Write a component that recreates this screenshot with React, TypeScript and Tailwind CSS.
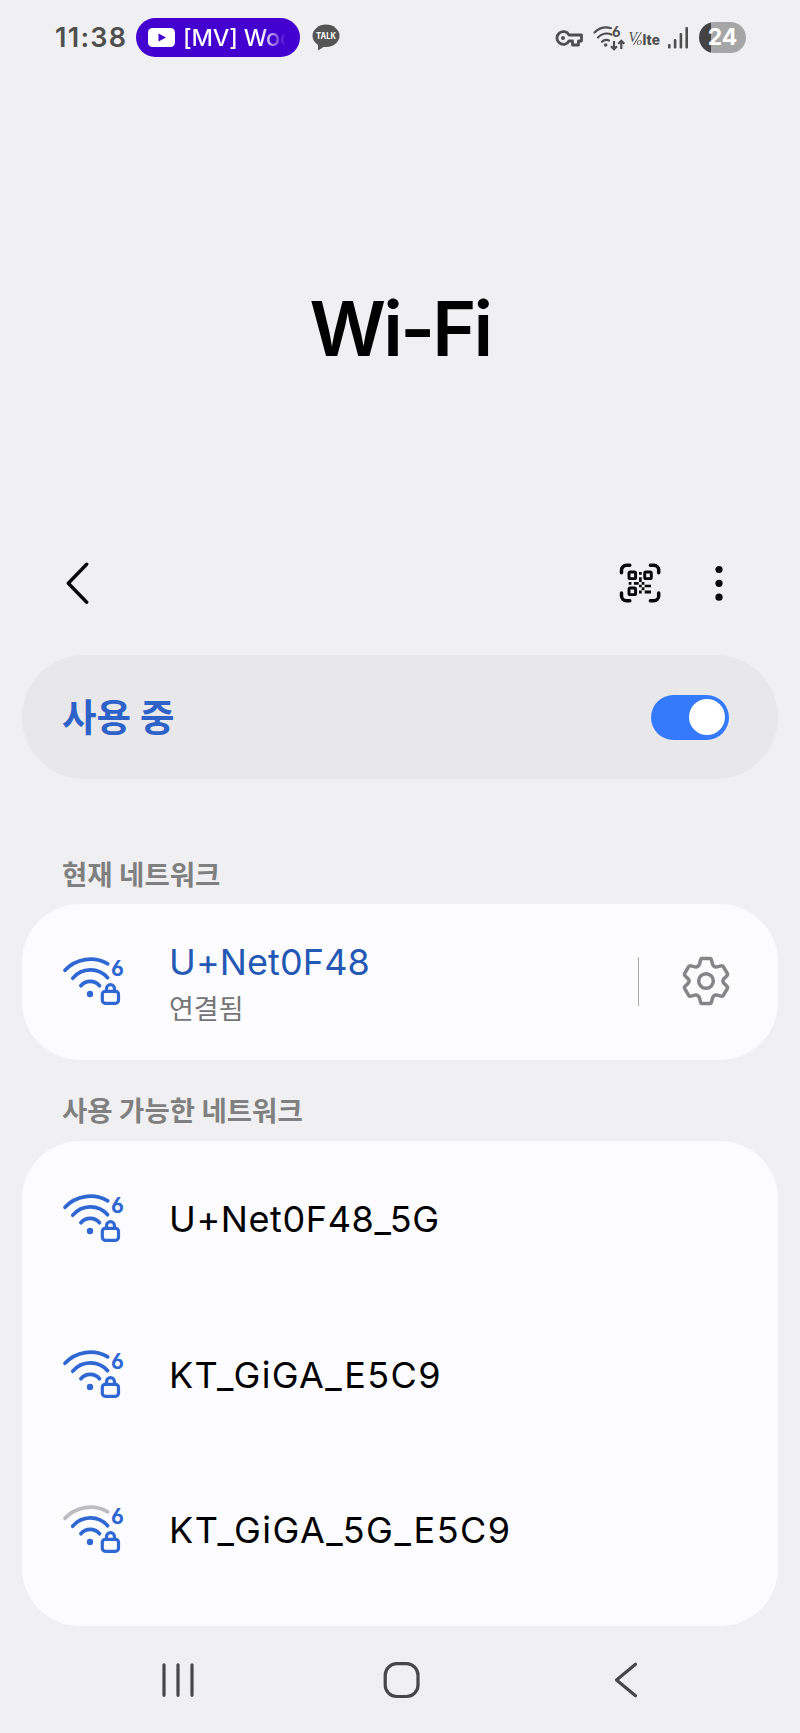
const networks = [
  { name: "U+Net0F48_5G", strong: true, spacing: "tracking-[0.6px]" },
  { name: "KT_GiGA_E5C9", strong: true, spacing: "tracking-[1.35px]" },
  { name: "KT_GiGA_5G_E5C9", strong: false, spacing: "tracking-[1.5px]" },
];

const WifiIcon = ({ strong = true }: { strong?: boolean }) => (
  <svg width="64" height="52" viewBox="0 0 64 52" fill="none" stroke="#2f67d3" strokeWidth="3.7" strokeLinecap="round" className="shrink-0">
    <path d="M3 16.3A34.9 34.9 0 0 1 45.7 9.8" stroke={strong ? "#2f67d3" : "#bdbdbd"} />
    <path d="M10.8 24.2A22.7 22.7 0 0 1 45.6 23.7" />
    <path d="M18.9 31.7A12.2 12.2 0 0 1 37.5 31.7" />
    <circle cx="28" cy="40" r="3.2" fill="#2f67d3" stroke="none" />
    <rect x="40.3" y="37.3" width="16.2" height="12" rx="3" strokeWidth="3.2" />
    <path d="M44.5 37v-2.3a4 4 0 0 1 8 0V37" strokeWidth="3.2" />
    <text
      x="49"
      y="22"
      fill="#2f67d3"
      stroke="none"
      className="font-['Inter'] text-[21px] font-bold [font-feature-settings:'cv03']"
    >
      6
    </text>
  </svg>
);

const StatusBar = () => (
  <div className="flex h-[75px] shrink-0 items-center pl-[55px] pr-[54px] text-[#4f4f4f]">
    <span className="w-[81px] shrink-0 text-[27px] font-semibold leading-none tracking-[1.3px]">11:38</span>
    <div className="flex h-[39px] w-[164px] shrink-0 items-center rounded-full bg-[#4300cf] pl-3">
      <svg width="27" height="19" viewBox="0 0 27 19" className="shrink-0">
        <rect width="27" height="19" rx="4.5" fill="#fff" />
        <path d="M10.5 5.5v8l7.5-4z" fill="#4300cf" />
      </svg>
      <span className="ml-2 w-[112px] shrink-0 whitespace-nowrap bg-linear-to-r from-white from-70% to-transparent to-92% bg-clip-text text-[23.5px] font-medium leading-[34px] tracking-[-0.2px] text-transparent">
        [MV] Woo
      </span>
    </div>
    {/* KakaoTalk */}
    <svg width="28" height="27" viewBox="0 0 28 27" className="ml-3 shrink-0">
      <ellipse cx="14" cy="11.8" rx="13.5" ry="11.2" fill="#555" />
      <path d="M6 18v8.5l8-5z" fill="#555" />
      <text x="14" y="15" textAnchor="middle" textLength="20" lengthAdjust="spacingAndGlyphs" fill="#fff" className="font-['Inter'] text-[9px] font-bold">
        TALK
      </text>
    </svg>

    <div className="ml-auto flex items-center">
      {/* VPN key */}
      <svg width="28" height="18" viewBox="0 0 28 18" fill="none" stroke="#4f4f4f" strokeWidth="2.8">
        <path d="M14 6A6.4 6.4 0 1 0 14 12h3.5v4h6v-4H26.5V6z" strokeLinejoin="round" />
        <circle cx="8" cy="9" r="2" fill="#4f4f4f" stroke="none" />
      </svg>
      <svg width="34" height="32" viewBox="0 -3 34 32" fill="none" stroke="#4f4f4f" strokeWidth="2.2" strokeLinecap="round" className="ml-2.5">
        <path d="M1.5 7.5A17 17 0 0 1 18 3.2" />
        <path d="M5 12.5A12 12 0 0 1 18.5 9.6" />
        <path d="M9 16.8A6 6 0 0 1 16 15.6" />
        <circle cx="12.7" cy="20" r="1.7" fill="#4f4f4f" stroke="none" />
        <path d="M21 16v8M18 21.3l3 3 3-3M28.3 24v-8M25.3 18.7l3-3 3 3" strokeLinecap="butt" />
        <text x="19" y="12" fill="#4f4f4f" stroke="none" className="font-['Inter'] text-[14px] font-bold [font-feature-settings:'cv03']">
          6
        </text>
      </svg>
      <svg width="33" height="24" viewBox="0 0 33 24" fill="#4f4f4f" className="ml-0.5">
        <text x="-0.5" y="15.5" className="font-['Liberation_Serif'] text-[14px] italic">V</text>
        <path d="M12.5 6 4.5 19" stroke="#4f4f4f" strokeWidth="1" />
        <text x="7.5" y="19" className="font-['Liberation_Serif'] text-[11px] italic">o</text>
        <text x="13.5" y="18.7" textLength="17.5" lengthAdjust="spacingAndGlyphs" className="font-['Inter'] text-[14px] font-extrabold">
          lte
        </text>
      </svg>
      <svg width="20" height="22" viewBox="0 0 20 22" className="ml-1.5" fill="#4f4f4f">
        <rect x="0" y="17" width="2.6" height="4.5" rx="1" />
        <rect x="5.8" y="12" width="2.6" height="9.5" rx="1" />
        <rect x="11.6" y="6" width="2.6" height="15.5" rx="1" />
        <rect x="17.4" y="0" width="2.6" height="21.5" rx="1" />
      </svg>
      <div className="ml-[11px] flex h-[31px] w-[47px] items-center justify-center rounded-full bg-linear-to-r from-[#444] from-25% to-[#a6a6a6] to-25% text-[23px] font-bold leading-none text-white">
        24
      </div>
    </div>
  </div>
);

const QrIcon = () => (
  <svg width="44" height="42" viewBox="0 0 44 42" fill="none" stroke="#080808">
    <path
      d="M3.5 10.8V8.3a5 5 0 0 1 5-5h3.3M32.4 3.3h3.3a5 5 0 0 1 5 5v2.5M40.7 31v2.7a5 5 0 0 1-5 5h-3.3M11.8 38.7H8.5a5 5 0 0 1-5-5V31"
      strokeWidth="3.5"
      strokeLinecap="round"
    />
    <rect x="11" y="10" width="6.6" height="6.6" rx="1.2" strokeWidth="2.9" />
    <rect x="26.7" y="10" width="6.6" height="6.6" rx="1.2" strokeWidth="2.9" />
    <rect x="11" y="26" width="6.6" height="6.6" rx="1.2" strokeWidth="2.9" />
    <path
      d="M21 10h2.7v2.7H21zM21 15.3h2.7V20H21zM10.7 20h2.7v2.7h-2.7zM16 20h4.7v2.7H16zM23.7 20h2.7v2.7h-2.7zM21 22.7h2.7v2.6H21zM26.7 22.7H33v2.6h-6.3zM23.7 25.3h2.7v2.9h-2.7zM21 28.6h2.7v2.8H21zM26.7 28.6H33v2.8h-6.3z"
      fill="#080808"
      stroke="none"
    />
  </svg>
);

const GearIcon = () => (
  <svg width="50" height="50" viewBox="-25 -25 50 50" fill="none" stroke="#858585" strokeWidth="3.5" strokeLinejoin="round">
    <path d="M-4.3-22.5H4.3Q5-22.5 5.3-21.5L6.5-17Q7.2-14.6 10-13.9L15.2-15.1Q16.6-15.4 17.3-14.4L21.5-7.3Q21.9-6.5 21.2-5.6L17.6-2Q16.2 0 17.6 2L21.2 5.6Q21.9 6.5 21.5 7.3L17.3 14.4Q16.6 15.4 15.2 15.1L10 13.9Q7.2 14.6 6.5 17L5.3 21.5Q5 22.5 4.3 22.5H-4.3Q-5 22.5-5.3 21.5L-6.5 17Q-7.2 14.6-10 13.9L-15.2 15.1Q-16.6 15.4-17.3 14.4L-21.5 7.3Q-21.9 6.5-21.2 5.6L-17.6 2Q-16.2 0-17.6-2L-21.2-5.6Q-21.9-6.5-21.5-7.3L-17.3-14.4Q-16.6-15.4-15.2-15.1L-10-13.9Q-7.2-14.6-6.5-17L-5.3-21.5Q-5-22.5-4.3-22.5Z" />
    <circle r="7.3" />
  </svg>
);

export default function App() {
  return (
    <div className="flex h-[1733px] w-[800px] flex-col overflow-hidden bg-[#f0f0f2] font-['Inter','Noto_Sans_CJK_KR',sans-serif] text-black">
      <StatusBar />

      <div className="flex h-[466px] shrink-0 items-center justify-center pt-10">
        <h1 className="text-[75px] font-[560] leading-none tracking-[-2.8px]">Wi-Fi</h1>
      </div>

      {/* Toolbar */}
      <div className="flex h-[84px] shrink-0 items-center pl-[66px] pr-[76px]">
        <svg width="24" height="42" viewBox="0 0 24 42" fill="none" stroke="#080808" strokeWidth="3.4" strokeLinecap="round" strokeLinejoin="round">
          <path d="M20.7 2.3 2.3 21.3l18.4 19" />
        </svg>
        <div className="ml-auto">
          <QrIcon />
        </div>
        <svg width="10" height="40" viewBox="0 0 10 40" className="ml-[52px]" fill="#080808">
          <circle cx="5" cy="6.5" r="3.6" />
          <circle cx="5" cy="20.3" r="3.6" />
          <circle cx="5" cy="34.2" r="3.6" />
        </svg>
      </div>

      <div className="mx-[22px] mt-[30px] flex h-[124px] shrink-0 items-center justify-between rounded-full bg-[#e8e8ea] pl-10 pr-[49px]">
        <span className="pt-0.5 text-[37.5px] font-bold leading-none text-[#2f62c8]">사용 중</span>
        <div className="flex h-[45px] w-[78px] items-center justify-end rounded-full bg-[#3579fd] pr-1">
          <div className="size-9 rounded-full bg-white" />
        </div>
      </div>

      <h2 className="mt-[76px] h-[49px] shrink-0 pl-[62px] text-[27.5px] font-bold leading-10 text-[#808080]">현재 네트워크</h2>
      <div className="mx-[22px] flex h-[156px] shrink-0 items-center rounded-[58px] bg-[#fcfcfe] pl-10 pr-[47px]">
        <div className="pb-1">
          <WifiIcon />
        </div>
        <div className="ml-[43px] flex flex-col gap-1.5 pt-1.5">
          <span className="text-[36px] leading-[44px] tracking-[0.1px] text-[#2458b5]">U+Net0F48</span>
          <span className="text-[27px] leading-10 text-[#757575]">연결됨</span>
        </div>
        <div className="mb-0.5 ml-auto h-[49px] w-[1.5px] bg-[#aaa]" />
        <div className="mb-0.5 ml-[42px]">
          <GearIcon />
        </div>
      </div>

      <h2 className="mt-[31px] h-[50px] shrink-0 pl-[62px] text-[27.5px] font-bold leading-10 text-[#808080]">사용 가능한 네트워크</h2>
      <div className="mx-[22px] h-[485px] shrink-0 rounded-[58px] bg-[#fcfcfe]">
        {networks.map((network) => (
          <div key={network.name} className="flex h-[155.7px] items-center pl-10">
            <div className="pb-1">
              <WifiIcon strong={network.strong} />
            </div>
            <span className={`ml-[43px] text-[36px] leading-[44px] ${network.spacing}`}>{network.name}</span>
          </div>
        ))}
      </div>

      {/* Navigation bar */}
      <div className="flex h-[107px] shrink-0 items-center pl-[161px]">
        <svg width="34" height="38" viewBox="0 0 34 38" stroke="#474747" strokeWidth="3.2" strokeLinecap="round">
          <path d="M3 3.8v30.5M17 3.8v30.5M31 3.8v30.5" />
        </svg>
        <svg width="38" height="38" viewBox="0 0 38 38" fill="none" stroke="#474747" strokeWidth="3.2" className="ml-[188px]">
          <rect x="2.2" y="2.7" width="32.8" height="32.8" rx="11.5" />
        </svg>
        <svg width="26" height="38" viewBox="0 0 26 38" fill="none" stroke="#474747" strokeWidth="3.2" strokeLinecap="round" strokeLinejoin="round" className="ml-[193px]">
          <path d="M21.5 3.2 2.5 19 21.5 34.8" />
        </svg>
      </div>
    </div>
  );
}
